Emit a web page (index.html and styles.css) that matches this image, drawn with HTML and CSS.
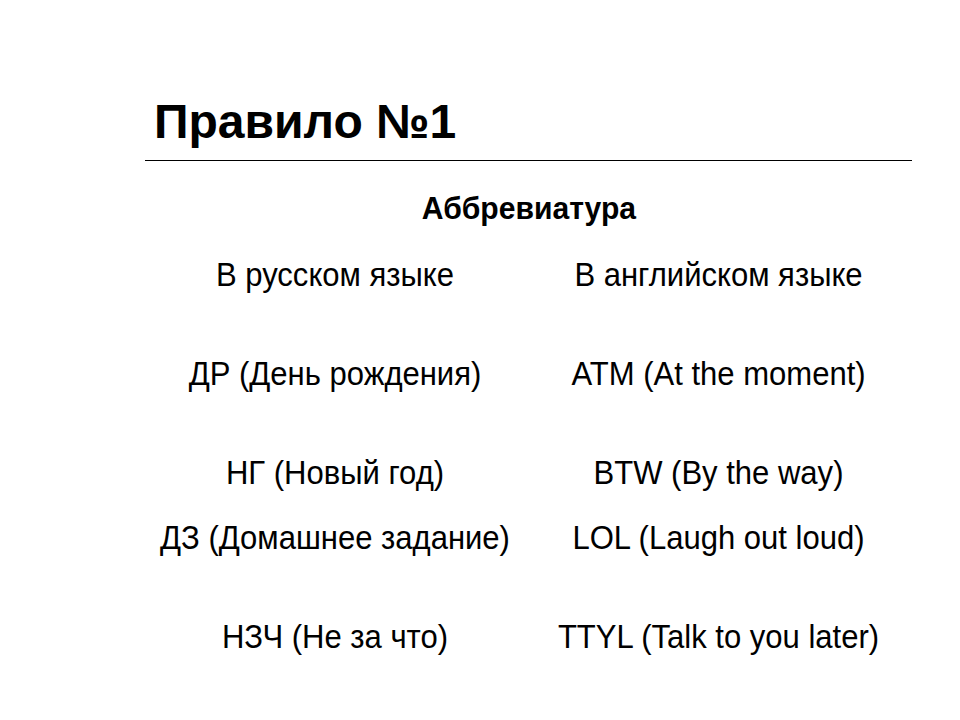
FILE: index.html
```html
<!DOCTYPE html>
<html lang="ru">
<head>
<meta charset="utf-8">
<link rel="stylesheet" href="styles.css">
</head>
<body>
<div class="slide">
  <h1 class="title">Правило №1</h1>
  <div class="rule"></div>
  <div class="table">
    <div class="row head"><span>Аббревиатура</span></div>
    <div class="row pair gap-h"><span>В русском языке</span><span>В английском языке</span></div>
    <div class="row pair gap-l"><span>ДР (День рождения)</span><span>ATM (At the moment)</span></div>
    <div class="row pair gap-l"><span>НГ (Новый год)</span><span>BTW (By the way)</span></div>
    <div class="row pair gap-s"><span>ДЗ (Домашнее задание)</span><span>LOL (Laugh out loud)</span></div>
    <div class="row pair gap-l"><span>НЗЧ (Не за что)</span><span>TTYL (Talk to you later)</span></div>
  </div>
</div>
</body>
</html>
```
FILE: styles.css
```css
html, body { margin: 0; padding: 0; background: #fff; }
.slide { width: 960px; height: 720px; color: #000; }
.title {
  margin: 0;
  padding: 98px 0 0 154px;
  font-family: "Liberation Sans", Arial, sans-serif;
  font-weight: bold;
  font-size: 48px;
  line-height: 48px;
}
.rule { margin: 14px 48px 0 145px; height: 1px; background: #000; }
.table {
  margin: 0 48px 0 145px;
  font-family: "Liberation Sans", Arial, sans-serif;
  font-size: 33px;
  line-height: 34px;
}
.row { height: 34px; }
.row span { display: inline-block; white-space: nowrap; transform: scaleX(0.94); }
.head { margin-top: 30px; text-align: center; font-weight: bold; font-size: 32px; }
.pair { display: grid; grid-template-columns: 380px 1fr; text-align: center; }
.gap-h { margin-top: 33px; }
.gap-s { margin-top: 31px; }
.gap-l { margin-top: 65px; }
```
